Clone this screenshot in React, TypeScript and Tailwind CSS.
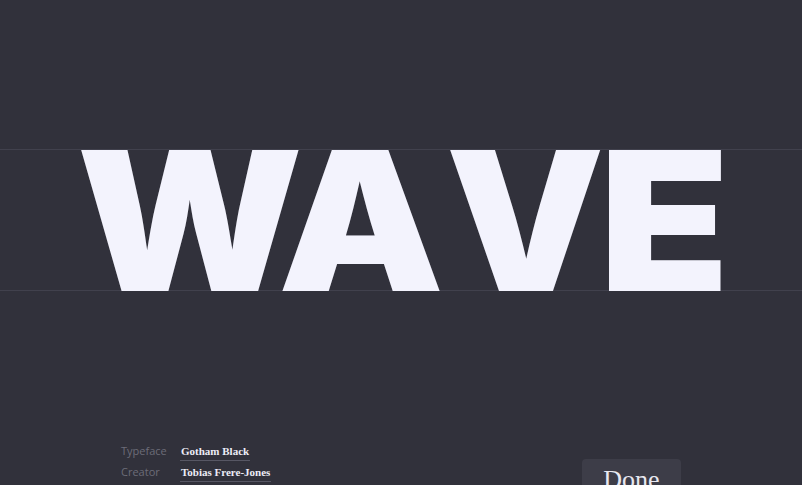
const letters = [
  { ch: "W", box: "w-[220px]", scale: "scale-x-[1.08]" },
  { ch: "A", box: "w-[157px] ml-[-17px]", scale: "scale-x-[1.08]" },
  { ch: "V", box: "w-[150px] ml-[10px]", scale: "scale-x-[1.03]" },
  { ch: "E", box: "w-[115px] ml-[7px]", scale: "scale-x-[1.1]" },
];

export default function App() {
  return (
    <div className="h-[485px] w-[802px] overflow-hidden bg-[#31313b] font-['Open_Sans',sans-serif]">
      <div className="h-[149px]" />
      <div className="flex h-[142px] items-start justify-center border-y border-[#41414d]">
        {letters.map((l) => (
          <div key={l.ch} className={`flex h-[140px] shrink-0 justify-center ${l.box}`}>
            <span
              className={`mt-[-26px] inline-block h-[194px] origin-center font-['Inter',sans-serif] text-[194px] font-black leading-none text-[#f3f3fd] ${l.scale}`}
            >
              {l.ch}
            </span>
          </div>
        ))}
      </div>
      <div className="flex h-[194px] items-end justify-between pl-[121px] pr-[121px]">
        <div className="mb-[3px] grid grid-cols-[59px_auto] gap-y-[2px] text-[11px]">
          <span className="leading-[18px] text-[#6c6c78]">Typeface</span>
          <span className="justify-self-start border-b border-[#575764] px-px font-['Liberation_Serif',serif] leading-[18px] font-bold text-[#ececf6]">
            Gotham Black
          </span>
          <span className="leading-[18px] text-[#6c6c78]">Creator</span>
          <span className="justify-self-start border-b border-[#575764] px-px font-['Liberation_Serif',serif] leading-[18px] font-bold text-[#ececf6]">
            Tobias Frere-Jones
          </span>
        </div>
        <button className="mb-[-28px] flex h-[54px] w-[99px] justify-center rounded-[4px] bg-[#3d3d48] pt-[6px] font-['Liberation_Serif',serif] text-[26px] leading-[30px] text-[#e8e8f0]">
          Done
        </button>
      </div>
    </div>
  );
}
